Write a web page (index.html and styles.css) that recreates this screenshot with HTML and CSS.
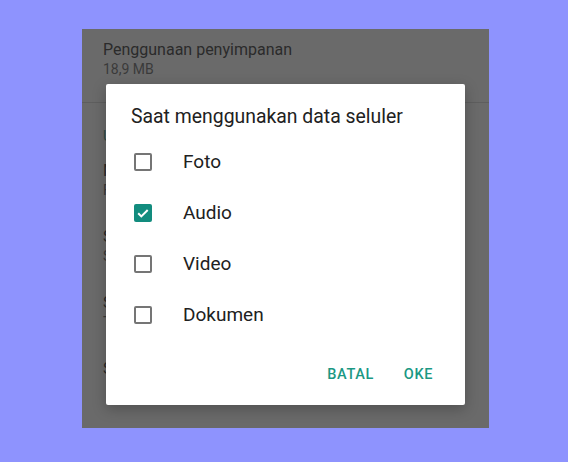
FILE: index.html
```html
<!DOCTYPE html>
<html lang="id">
<head>
  <meta charset="UTF-8" />
  <meta name="viewport" content="width=device-width, initial-scale=1.0" />
  <title>Penyimpanan dan data</title>
  <link rel="stylesheet" href="styles.css">
</head>
<body>

  <div class="screen">
    <div class="setting first">
      <div class="setting-title">Penggunaan penyimpanan</div>
      <div class="setting-sub">18,9 MB</div>
    </div>
    <div class="section-head">Unduh media otomatis</div>
    <div class="setting">
      <div class="setting-title">Menggunakan data seluler</div>
      <div class="setting-sub">Foto</div>
    </div>
    <div class="setting">
      <div class="setting-title">Saat terhubung ke Wi-Fi</div>
      <div class="setting-sub">Semua media</div>
    </div>
    <div class="setting">
      <div class="setting-title">Saat roaming</div>
      <div class="setting-sub">Tidak ada media</div>
    </div>
    <div class="setting">
      <div class="setting-title">Saat panggilan</div>
    </div>

    <div class="dialog">
      <div class="dialog-title">Saat menggunakan data seluler</div>
      <ul class="options">
        <li><span class="box"></span>Foto</li>
        <li>
          <span class="box checked">
            <svg width="18" height="18" viewBox="0 0 18 18"><path d="M4.2 9.3l3.1 3.1 6.4-6.4" fill="none" stroke="#fff" stroke-width="2"/></svg>
          </span>Audio
        </li>
        <li><span class="box"></span>Video</li>
        <li><span class="box"></span>Dokumen</li>
      </ul>
      <div class="actions">
        <button>Batal</button>
        <button>Oke</button>
      </div>
    </div>
  </div>

</body>
</html>
```

FILE: styles.css
```css
body {
  margin: 0;
  background: #8e93fe;
  font-family: Roboto, "Liberation Sans", sans-serif;
}

.screen {
  position: relative;
  width: 407px;
  height: 399px;
  margin: 29px 0 0 82px;
  background: #6a6a6a;
  overflow: hidden;
}

/* dimmed list behind the dialog */
.setting {
  padding: 12px 0 16px 21px;
}

.setting.first {
  padding-top: 11px;
  padding-bottom: 24px;
  border-bottom: 1px solid #5e5e5e;
}

.setting-title {
  font-size: 16px;
  line-height: 20px;
  color: #2b2b2b;
}

.setting-sub {
  font-size: 14px;
  line-height: 18px;
  color: #3a3a3a;
}

.section-head {
  padding: 24px 0 4px 21px;
  font-size: 14px;
  line-height: 18px;
  color: #2f4a46;
}

/* dialog */
.dialog {
  position: absolute;
  left: 24px;
  top: 55px;
  width: 359px;
  height: 321px;
  box-sizing: border-box;
  padding: 21px 0 0 25px;
  background: #fff;
  border-radius: 2px;
  box-shadow: 0 4px 14px rgba(0,0,0,0.25);
}

.dialog-title {
  font-size: 19.4px;
  line-height: 24px;
  color: #212121;
  margin-bottom: 7px;
}

.options {
  list-style: none;
  margin: 0;
  padding: 0;
}

.options li {
  display: flex;
  align-items: center;
  gap: 28px;
  height: 51px;
  font-size: 19px;
  color: #212121;
}

.box {
  width: 18px;
  height: 18px;
  margin: 3px;
  box-sizing: border-box;
  border: 2px solid #757575;
  border-radius: 2px;
}

.box.checked {
  border: none;
  background: #128c7e;
}

.box svg {
  display: block;
}

.actions {
  display: flex;
  justify-content: flex-end;
  gap: 30px;
  margin-top: 16px;
  padding-right: 32px;
}

.actions button {
  height: 36px;
  padding: 0;
  border: none;
  background: none;
  font-family: inherit;
  font-size: 14.5px;
  font-weight: 500;
  letter-spacing: 0.6px;
  text-transform: uppercase;
  color: #1b9883;
  cursor: pointer;
}
```
